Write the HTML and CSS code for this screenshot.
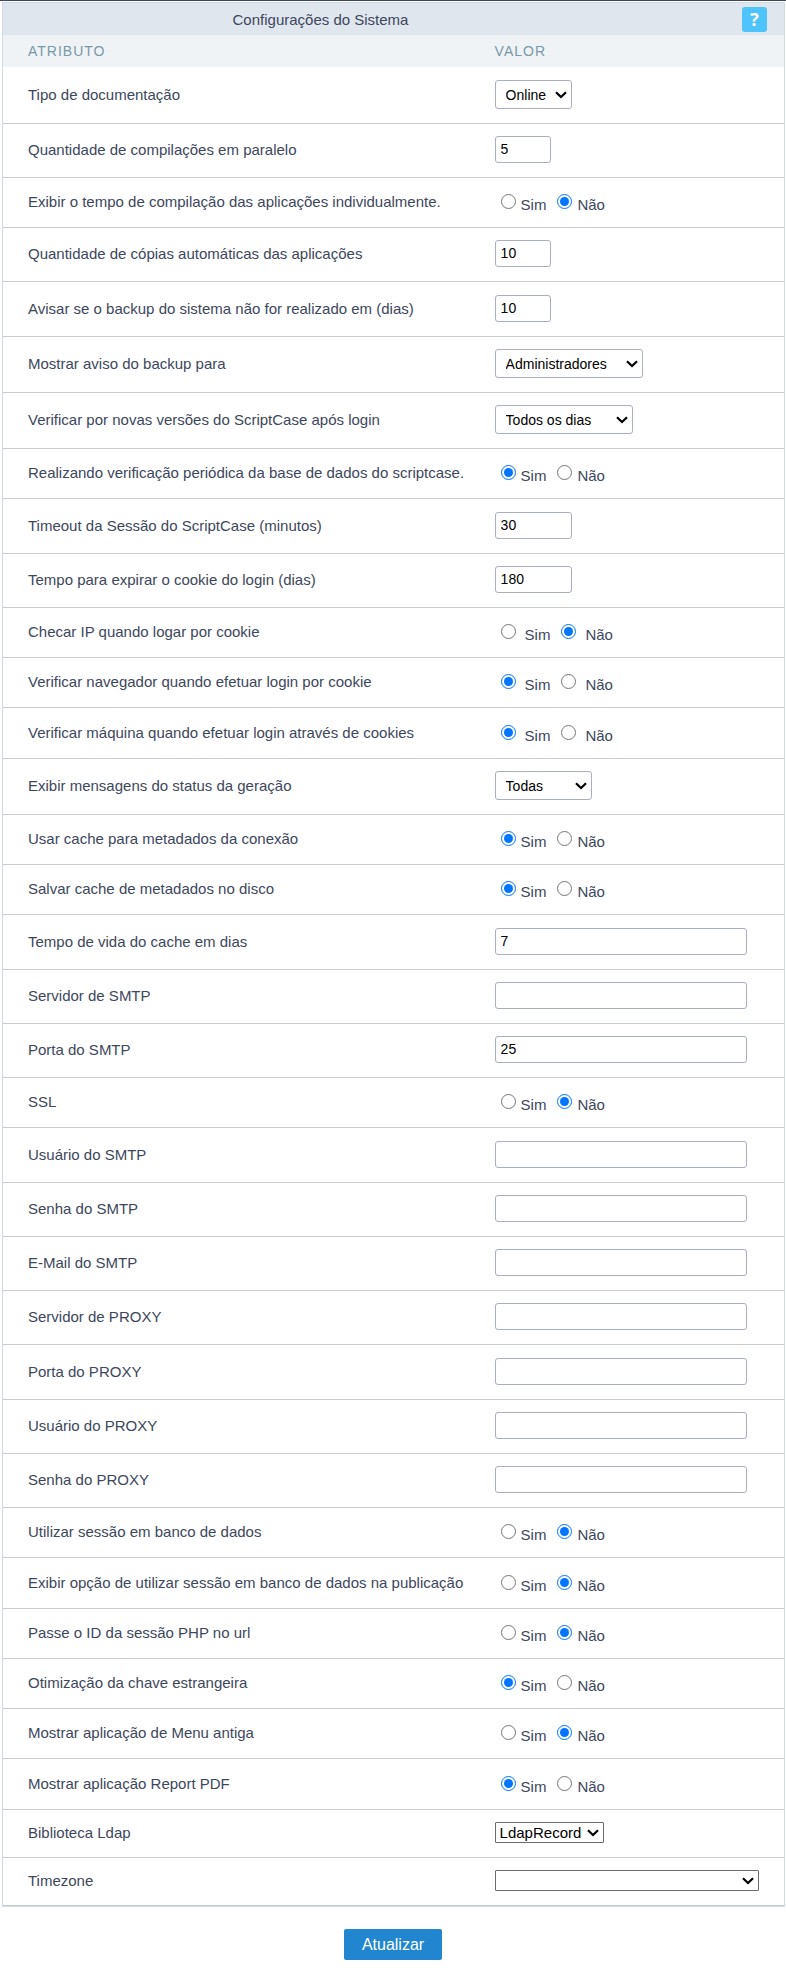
FILE: index.html
```html
<!DOCTYPE html>
<html lang="pt-br">
<head>
    <meta charset="utf-8">
    <title>Configurações do Sistema</title>
    <link rel="stylesheet" href="styles.css">
</head>
<body>
<form class="config" id="formConfig">
    <div class="painel">
        <div class="titulo">
            <h1>Configurações do Sistema</h1>
            <div class="ajuda"><button type="button" class="btnAjuda">?</button></div>
        </div>
        <table class="tabela">
            <thead>
                <tr>
                    <th class="colAtributo">Atributo</th>
                    <th>Valor</th>
                </tr>
            </thead>
            <tbody id="linhas"></tbody>
        </table>
    </div>
    <div class="rodape">
        <button type="submit" class="btnAtualizar">Atualizar</button>
    </div>
</form>
<script src="config.js"></script>
</body>
</html>
```
FILE: styles.css
```css
* {
    box-sizing: border-box;
}

body {
    margin: 0;
    background: #fff;
    color: #3d475c;
    font-family: Arial, "Liberation Sans", sans-serif;
    font-size: 15px;
    line-height: 17px;
}

.config {
    border-top: 1px solid #3d475c;
}

.painel {
    margin: 1px 1px 0 2px;
    border: 1px solid #d0dce4;
}

/* cabecalho */
.titulo {
    display: flex;
    align-items: center;
    height: 32px;
    background: #dfe6ee;
}

.titulo h1 {
    flex: 1;
    margin: 0;
    font-size: 15px;
    font-weight: normal;
    text-align: center;
}

.ajuda {
    width: 146px;
    padding-right: 17px;
    text-align: right;
}

.btnAjuda {
    width: 25px;
    height: 25px;
    padding: 0;
    border: 0;
    border-radius: 3px;
    background: #4fc3fb;
    color: #fff;
    font: bold 18px/25px "Open Sans", sans-serif;
}

/* tabela */
.tabela {
    width: 100%;
    border-collapse: separate;
    border-spacing: 0;
    table-layout: fixed;
}

.tabela th {
    height: 32px;
    padding: 0 23px;
    background: #eff3f6;
    color: #7799a8;
    font-size: 14px;
    font-weight: normal;
    letter-spacing: 1px;
    text-align: left;
    text-transform: uppercase;
}

.tabela .colAtributo {
    width: 60%;
    padding: 0 25px;
}

.tabela td {
    padding: 12px 23px 14px;
    border-bottom: 1px solid #c8cccf;
    vertical-align: middle;
}

.tabela tr:nth-child(4n+1) td {
    padding-top: 13px;
}

.tabela .nome,
.tabela tr:nth-child(4n+1) .nome {
    padding: 0 0 2px 25px;
}

.tabela input[type="text"],
.tabela select {
    display: block;
    border: 1px solid #a9afbf;
    border-radius: 3px;
    background: #fff;
    color: #000;
    font-family: Arial, "Liberation Sans", sans-serif;
    font-size: 14px;
}

.tabela input[type="text"] {
    width: 252px;
    height: 27px;
    padding: 0 5px 2px;
}

.tabela input.curto {
    width: 56px;
}

.tabela input.medio {
    width: 77px;
}

.tabela select {
    height: 29px;
    padding: 0 18px 0 10px;
    appearance: none;
    background: #fff url("data:image/svg+xml,%3Csvg xmlns='http://www.w3.org/2000/svg' width='12' height='8'%3E%3Cpath d='M1 1.2L6 6L11 1.2' fill='none' stroke='%23000' stroke-width='2.2'/%3E%3C/svg%3E") no-repeat right 4px center;
}

.tabela select.simples {
    height: 21px;
    padding: 0 18px 0 4px;
    border-color: #6b6b6b;
    border-radius: 1px;
    font-size: 15px;
}

.w77 { width: 77px; }
.w97 { width: 97px; }
.w109 { width: 109px; }
.w138 { width: 138px; }
.w148 { width: 148px; }
.w264 { width: 264px; }

/* radios */
.opcoes {
    display: flex;
    gap: 11px;
    height: 23px;
    padding: 4px 0 0 6px;
}

.opcoes span {
    display: flex;
    align-items: flex-start;
    gap: 5px;
}

.opcoes.largo span {
    gap: 9px;
}

.opcoes input {
    width: 15px;
    height: 15px;
    margin: 0;
}

.opcoes label {
    padding-top: 2px;
}

/* botao */
.rodape {
    padding: 22px 0 18px;
    text-align: center;
}

.btnAtualizar {
    height: 31px;
    padding: 0 18px;
    border: 0;
    border-radius: 2px;
    background: #2185d0;
    color: #fff;
    font: 16px Arial, "Liberation Sans", sans-serif;
}
```
FILE: config.js
```js
const campos = [
    { nome: 'Tipo de documentação', tipo: 'select', valor: 'Online', classe: 'w77' },
    { nome: 'Quantidade de compilações em paralelo', tipo: 'texto', valor: '5', classe: 'curto' },
    { nome: 'Exibir o tempo de compilação das aplicações individualmente.', tipo: 'radio', valor: 'Não' },
    { nome: 'Quantidade de cópias automáticas das aplicações', tipo: 'texto', valor: '10', classe: 'curto' },
    { nome: 'Avisar se o backup do sistema não for realizado em (dias)', tipo: 'texto', valor: '10', classe: 'curto' },
    { nome: 'Mostrar aviso do backup para', tipo: 'select', valor: 'Administradores', classe: 'w148' },
    { nome: 'Verificar por novas versões do ScriptCase após login', tipo: 'select', valor: 'Todos os dias', classe: 'w138' },
    { nome: 'Realizando verificação periódica da base de dados do scriptcase.', tipo: 'radio', valor: 'Sim' },
    { nome: 'Timeout da Sessão do ScriptCase (minutos)', tipo: 'texto', valor: '30', classe: 'medio' },
    { nome: 'Tempo para expirar o cookie do login (dias)', tipo: 'texto', valor: '180', classe: 'medio' },
    { nome: 'Checar IP quando logar por cookie', tipo: 'radio', valor: 'Não', classe: 'largo' },
    { nome: 'Verificar navegador quando efetuar login por cookie', tipo: 'radio', valor: 'Sim', classe: 'largo' },
    { nome: 'Verificar máquina quando efetuar login através de cookies', tipo: 'radio', valor: 'Sim', classe: 'largo' },
    { nome: 'Exibir mensagens do status da geração', tipo: 'select', valor: 'Todas', classe: 'w97' },
    { nome: 'Usar cache para metadados da conexão', tipo: 'radio', valor: 'Sim' },
    { nome: 'Salvar cache de metadados no disco', tipo: 'radio', valor: 'Sim' },
    { nome: 'Tempo de vida do cache em dias', tipo: 'texto', valor: '7' },
    { nome: 'Servidor de SMTP', tipo: 'texto', valor: '' },
    { nome: 'Porta do SMTP', tipo: 'texto', valor: '25' },
    { nome: 'SSL', tipo: 'radio', valor: 'Não' },
    { nome: 'Usuário do SMTP', tipo: 'texto', valor: '' },
    { nome: 'Senha do SMTP', tipo: 'texto', valor: '' },
    { nome: 'E-Mail do SMTP', tipo: 'texto', valor: '' },
    { nome: 'Servidor de PROXY', tipo: 'texto', valor: '' },
    { nome: 'Porta do PROXY', tipo: 'texto', valor: '' },
    { nome: 'Usuário do PROXY', tipo: 'texto', valor: '' },
    { nome: 'Senha do PROXY', tipo: 'texto', valor: '' },
    { nome: 'Utilizar sessão em banco de dados', tipo: 'radio', valor: 'Não' },
    { nome: 'Exibir opção de utilizar sessão em banco de dados na publicação', tipo: 'radio', valor: 'Não' },
    { nome: 'Passe o ID da sessão PHP no url', tipo: 'radio', valor: 'Não' },
    { nome: 'Otimização da chave estrangeira', tipo: 'radio', valor: 'Sim' },
    { nome: 'Mostrar aplicação de Menu antiga', tipo: 'radio', valor: 'Não' },
    { nome: 'Mostrar aplicação Report PDF', tipo: 'radio', valor: 'Sim' },
    { nome: 'Biblioteca Ldap', tipo: 'select', valor: 'LdapRecord', classe: 'simples w109' },
    { nome: 'Timezone', tipo: 'select', valor: '', classe: 'simples w264' }
];

function criaControle(campo, id) {
    const classe = campo.classe || '';
    if (campo.tipo === 'select') {
        return `<select id="${id}" class="${classe}"><option>${campo.valor}</option></select>`;
    }
    if (campo.tipo === 'texto') {
        return `<input type="text" id="${id}" class="${classe}" value="${campo.valor}">`;
    }
    const opcoes = ['Sim', 'Não'].map((opcao, i) => {
        const marcado = opcao === campo.valor ? 'checked' : '';
        return `<span><input type="radio" name="${id}" id="${id}_${i}" ${marcado}><label for="${id}_${i}">${opcao}</label></span>`;
    });
    return `<div class="opcoes ${classe}" role="radiogroup" aria-labelledby="${id}_nome">${opcoes.join('')}</div>`;
}

function mostrarCampos() {
    const linhas = document.getElementById('linhas');
    campos.forEach((campo, i) => {
        const id = 'campo' + i;
        const row = document.createElement('tr');
        // os radios ja tem um label para cada opcao
        const nome = campo.tipo === 'radio'
            ? `<span id="${id}_nome">${campo.nome}</span>`
            : `<label for="${id}">${campo.nome}</label>`;
        row.innerHTML = `<td class="nome">${nome}</td><td>${criaControle(campo, id)}</td>`;
        linhas.appendChild(row);
    });
}

mostrarCampos();
```
